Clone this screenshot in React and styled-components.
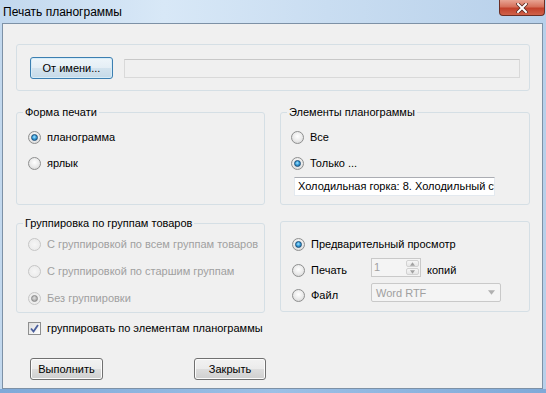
import React from "react";
import styled, { createGlobalStyle } from "styled-components";

const GlobalStyle = createGlobalStyle`
  html, body {
    margin: 0;
    padding: 0;
    width: 546px;
    height: 393px;
    overflow: hidden;
    font-family: "Liberation Sans", Arial, sans-serif;
    font-size: 11px;
  }
`;

const Window = styled.div`
  width: 546px;
  height: 393px;
  display: flex;
  flex-direction: column;
  box-sizing: border-box;
  background: linear-gradient(90deg, #c2d8ee 0%, #d8e8f7 30%, #c9ddf1 60%, #b7d0ea 100%);
  position: relative;
  &::after {
    content: "";
    position: absolute;
    left: 0;
    right: 0;
    bottom: 0;
    height: 4px;
    background: linear-gradient(90deg, #7fa9d8, #9cc0e6 50%, #7fa9d8);
  }
`;

const TitleBar = styled.div`
  height: 23px;
  display: flex;
  justify-content: space-between;
  align-items: flex-start;
  padding-left: 3px;
  flex: none;
`;

const Title = styled.span`
  font-family: "Liberation Sans", Arial, sans-serif;
  font-size: 12px;
  line-height: 14px;
  margin-top: 5px;
  color: #000;
`;

const CloseButton = styled.div`
  width: 46px;
  height: 16px;
  margin-right: 1px;
  box-sizing: border-box;
  border: 1px solid #6b2e24;
  border-top: none;
  border-radius: 0 0 4px 4px;
  background: linear-gradient(180deg, #e8a493 0%, #d6705b 45%, #c2412b 55%, #d0624a 100%);
  display: flex;
  align-items: center;
  justify-content: center;
`;

const Client = styled.div`
  flex: 1;
  margin: 0 3px 4px 2px;
  border: 1px solid #7d91a6;
  background: #f0f0f0;
  padding: 20px 12px 0 13px;
  display: flex;
  flex-direction: column;
`;

const TopGroup = styled.div`
  height: 47px;
  box-sizing: border-box;
  border: 1px solid #d5dfe5;
  border-radius: 3px;
  display: flex;
  align-items: center;
  padding: 1px 9px 0 13px;
  gap: 11px;
`;

const Row = styled.div`
  display: grid;
  grid-template-columns: 249px 250px;
  column-gap: 15px;
  margin-top: ${(p) => p.$top}px;
`;

const Fieldset = styled.fieldset`
  margin: 0;
  padding: 0;
  min-width: 0;
  height: ${(p) => p.$height}px;
  box-sizing: border-box;
  border: 1px solid #d5dfe5;
  border-radius: 3px;
  margin-top: ${(p) => p.$offset || 0}px;
`;

const Legend = styled.legend`
  margin-left: 6px;
  padding: 0 2px;
  line-height: 13px;
  color: #000;
`;

const Stack = styled.div`
  display: flex;
  flex-direction: column;
  gap: ${(p) => p.$gap}px;
  padding: ${(p) => p.$pad};
`;

const Option = styled.label`
  display: flex;
  align-items: center;
  gap: 6px;
  height: 16px;
  width: ${(p) => (p.$w ? `${p.$w}px` : "auto")};
  margin-top: ${(p) => p.$shift || 0}px;
  flex: none;
  color: ${(p) => (p.$disabled ? "#a0a0a0" : "#000")};
  white-space: nowrap;
`;

const Line = styled.div`
  display: flex;
  align-items: center;
  gap: 6px;
  height: 19px;
`;

const RadioMark = styled.span`
  width: 13px;
  height: 13px;
  box-sizing: border-box;
  border-radius: 50%;
  flex: none;
  position: relative;
  border: 1px solid ${(p) => (p.$disabled ? "#c6c6c6" : "#8e8f8f")};
  background: ${(p) =>
    p.$disabled
      ? "radial-gradient(circle at 50% 50%, #f6f6f6 0%, #ececec 70%, #e2e2e2 100%)"
      : "radial-gradient(circle at 50% 40%, #ffffff 0%, #e9e9e9 55%, #cdcdcd 100%)"};
  &::after {
    content: "";
    display: ${(p) => (p.$checked ? "block" : "none")};
    position: absolute;
    left: 2px;
    top: 2px;
    width: 7px;
    height: 7px;
    box-sizing: border-box;
    border-radius: 50%;
    border: 1px solid ${(p) => (p.$disabled ? "#8a8a8a" : "#1b4e78")};
    background: ${(p) =>
      p.$disabled
        ? "radial-gradient(circle at 45% 40%, #e0e0e0 0%, #a8a8a8 70%)"
        : "radial-gradient(circle at 45% 40%, #a9e6ff 0%, #3aa0dc 45%, #135f96 100%)"};
  }
`;

const CheckMark = styled.span`
  width: 13px;
  height: 13px;
  box-sizing: border-box;
  border: 1px solid #8e8f8f;
  background: linear-gradient(135deg, #dcdcdc 0%, #f6f6f6 70%, #ffffff 100%);
  display: flex;
  align-items: center;
  justify-content: center;
  flex: none;
`;

const CheckRow = styled(Option)`
  margin-top: 8px;
  margin-left: 12px;
  height: 14px;
`;

const Button = styled.button`
  font-family: "Liberation Sans", Arial, sans-serif;
  font-size: 11px;
  color: #000;
  width: ${(p) => p.$w}px;
  height: 22px;
  padding: 0;
  box-sizing: border-box;
  flex: none;
  border: 1px solid ${(p) => (p.$focus ? "#3c7fb1" : "#707070")};
  border-radius: 3px;
  box-shadow: inset 0 0 0 1px ${(p) => (p.$focus ? "#d6ecf8" : "#fcfcfc")};
  background: ${(p) =>
    p.$focus
      ? "linear-gradient(180deg, #eef5fa 0%, #e4eef5 50%, #d3e3ee 51%, #c6dae8 100%)"
      : "linear-gradient(180deg, #f2f2f2 0%, #ebebeb 50%, #dddddd 51%, #cfcfcf 100%)"};
`;

const TextField = styled.div`
  height: 19px;
  box-sizing: border-box;
  border: 1px solid;
  padding: 2px 3px 0;
  color: #000;
  white-space: nowrap;
  overflow: hidden;
  width: ${(p) => (p.$w ? `${p.$w}px` : "auto")};
  flex: ${(p) => (p.$w ? "none" : "1")};
  margin: ${(p) => p.$margin || "0"};
  background: ${(p) => (p.$blank ? "#f0f0f0" : "#fff")};
  border-color: ${(p) => (p.$blank ? "#d9d9d9" : "#e3e9ef")};
  border-top-color: ${(p) => (p.$blank ? "#c8c8c8" : "#abadb3")};
`;

const Spin = styled.div`
  width: 50px;
  height: 19px;
  box-sizing: border-box;
  border: 1px solid #c9c9c9;
  background: #f4f4f4;
  display: flex;
  flex: none;
`;

const SpinValue = styled.span`
  flex: 1;
  color: #a0a0a0;
  padding: 1px 0 0 2px;
  line-height: 14px;
`;

const SpinButtons = styled.div`
  width: 15px;
  display: flex;
  flex-direction: column;
  gap: 1px;
  padding: 1px;
  box-sizing: border-box;
`;

const SpinButton = styled.div`
  flex: 1;
  border: 1px solid #d2d2d2;
  border-radius: 2px;
  background: linear-gradient(180deg, #f6f6f6, #e6e6e6);
  display: flex;
  align-items: center;
  justify-content: center;
`;

const Combo = styled.div`
  width: 130px;
  height: 19px;
  box-sizing: border-box;
  border: 1px solid #c9c9c9;
  border-radius: 2px;
  background: #f4f4f4;
  display: flex;
  align-items: center;
  justify-content: space-between;
  padding: 0 5px 0 4px;
  color: #a0a0a0;
  flex: none;
`;

const Copies = styled.span`
  margin-top: 4px;
`;

const ButtonRow = styled.div`
  display: flex;
  gap: 91px;
  margin-top: 23px;
  padding-left: 14px;
`;

const Radio = ({ checked, disabled, children, w, shift }) => (
  <Option $disabled={disabled} $w={w} $shift={shift}>
    <RadioMark $checked={checked} $disabled={disabled} />
    {children}
  </Option>
);

const Arrow = ({ up, color = "#a0a0a0", size = 5 }) => (
  <svg width={size} height={Math.ceil(size / 2) + 1} viewBox="0 0 6 4">
    <path d={up ? "M0 4 L3 0 L6 4 Z" : "M0 0 L6 0 L3 4 Z"} fill={color} />
  </svg>
);

export default function App() {
  return (
    <>
      <GlobalStyle />
      <Window>
        <TitleBar>
          <Title>Печать планограммы</Title>
          <CloseButton>
            <svg width="12" height="10" viewBox="0 0 12 10">
              <path
                d="M2 1 L10 9 M10 1 L2 9"
                stroke="#5a2a22"
                strokeWidth="3.6"
                strokeLinecap="square"
              />
              <path
                d="M2 1 L10 9 M10 1 L2 9"
                stroke="#ffffff"
                strokeWidth="2"
                strokeLinecap="square"
              />
            </svg>
          </CloseButton>
        </TitleBar>
        <Client>
          <TopGroup>
            <Button $w={83} $focus>
              От имени...
            </Button>
            <TextField $blank />
          </TopGroup>

          <Row $top={15}>
            <Fieldset $height={99}>
              <Legend>Форма печати</Legend>
              <Stack $gap={10} $pad="10px 0 0 11px">
                <Radio checked>планограмма</Radio>
                <Radio>ярлык</Radio>
              </Stack>
            </Fieldset>
            <Fieldset $height={99}>
              <Legend>Элементы планограммы</Legend>
              <Stack $gap={10} $pad="10px 0 0 10px">
                <Radio>Все</Radio>
                <Radio checked>Только ...</Radio>
              </Stack>
              <TextField $w={201} $margin="6px 0 0 13px">
                Холодильная горка: 8. Холодильный ст
              </TextField>
            </Fieldset>
          </Row>

          <Row $top={12}>
            <Fieldset $height={96}>
              <Legend>Группировка по группам товаров</Legend>
              <Stack $gap={11} $pad="6px 0 0 11px">
                <Radio disabled>С группировкой по всем группам товаров</Radio>
                <Radio disabled>С группировкой по старшим группам</Radio>
                <Radio disabled checked>
                  Без группировки
                </Radio>
              </Stack>
            </Fieldset>
            <Fieldset $height={91} $offset={4}>
              <Stack $gap={6} $pad="14px 0 0 11px">
                <Radio checked>Предварительный просмотр</Radio>
                <Line>
                  <Radio w={73} shift={5}>
                    Печать
                  </Radio>
                  <Spin>
                    <SpinValue>1</SpinValue>
                    <SpinButtons>
                      <SpinButton>
                        <Arrow up size={5} />
                      </SpinButton>
                      <SpinButton>
                        <Arrow size={5} />
                      </SpinButton>
                    </SpinButtons>
                  </Spin>
                  <Copies>копий</Copies>
                </Line>
                <Line>
                  <Radio w={73} shift={5}>
                    Файл
                  </Radio>
                  <Combo>
                    <span>Word RTF</span>
                    <Arrow size={7} color="#b0b0b0" />
                  </Combo>
                </Line>
              </Stack>
            </Fieldset>
          </Row>

          <CheckRow>
            <CheckMark>
              <svg width="9" height="9" viewBox="0 0 9 9">
                <path
                  d="M1 4.5 L3.5 7.5 L8 1"
                  fill="none"
                  stroke="#4a5e9c"
                  strokeWidth="1.8"
                />
              </svg>
            </CheckMark>
            группировать по элементам планограммы
          </CheckRow>

          <ButtonRow>
            <Button $w={73}>Выполнить</Button>
            <Button $w={72}>Закрыть</Button>
          </ButtonRow>
        </Client>
      </Window>
    </>
  );
}
